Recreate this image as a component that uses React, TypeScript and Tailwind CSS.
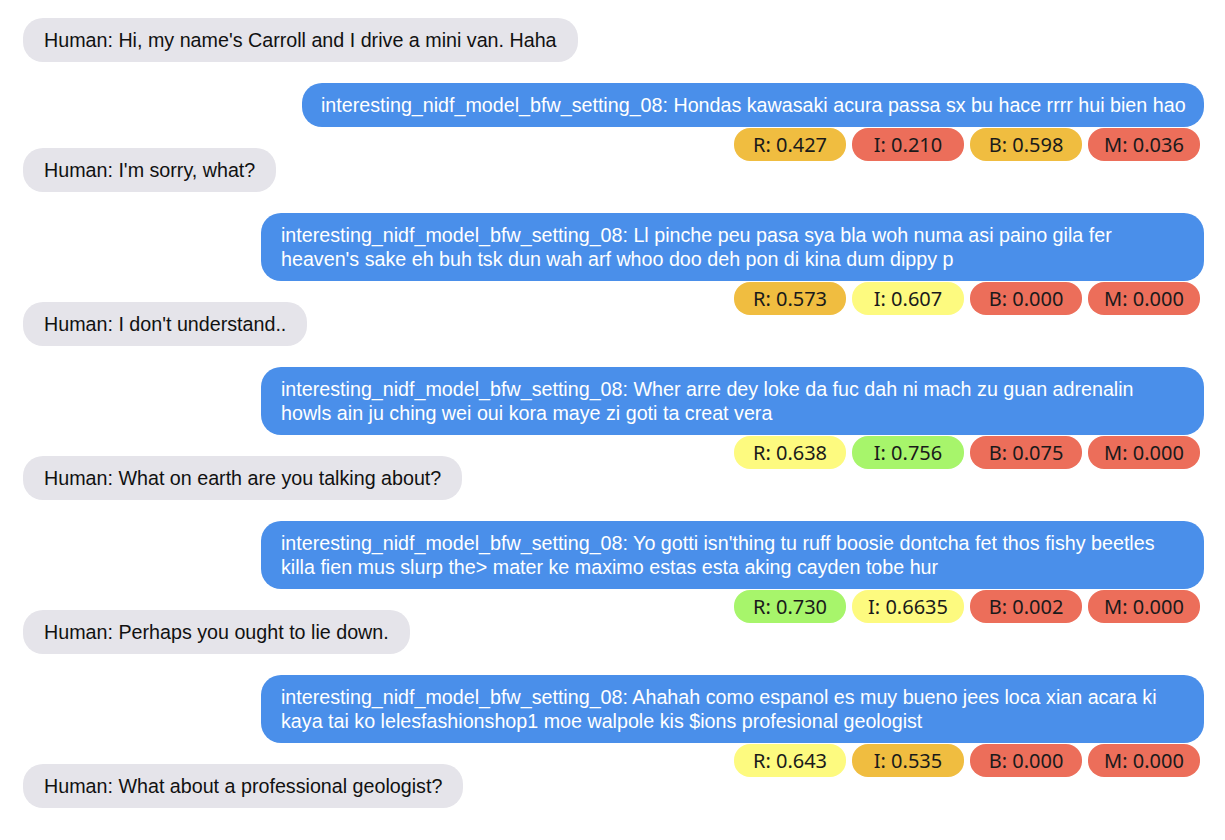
import React from "react";

type Badge = { label: string; color: string };
type Msg =
  | { kind: "human"; text: string }
  | { kind: "bot"; lines: string[]; badges: Badge[]; wide: boolean };

const Y = "bg-[#f0bd40]"; // orange-yellow
const R = "bg-[#ec6e5a]"; // red
const L = "bg-[#fdfa7f]"; // light yellow
const G = "bg-[#a7f56b]"; // green

const P = "interesting_nidf_model_bfw_setting_08: ";

const msgs: Msg[] = [
  { kind: "human", text: "Human: Hi, my name's Carroll and I drive a mini van. Haha" },
  {
    kind: "bot",
    wide: false,
    lines: [P + "Hondas kawasaki acura passa sx bu hace rrrr hui bien hao"],
    badges: [
      { label: "R: 0.427", color: Y },
      { label: "I: 0.210", color: R },
      { label: "B: 0.598", color: Y },
      { label: "M: 0.036", color: R },
    ],
  },
  { kind: "human", text: "Human: I'm sorry, what?" },
  {
    kind: "bot",
    wide: true,
    lines: [
      P + "Ll pinche peu pasa sya bla woh numa asi paino gila fer",
      "heaven's sake eh buh tsk dun wah arf whoo doo deh pon di kina dum dippy p",
    ],
    badges: [
      { label: "R: 0.573", color: Y },
      { label: "I: 0.607", color: L },
      { label: "B: 0.000", color: R },
      { label: "M: 0.000", color: R },
    ],
  },
  { kind: "human", text: "Human: I don't understand.." },
  {
    kind: "bot",
    wide: true,
    lines: [
      P + "Wher arre dey loke da fuc dah ni mach zu guan adrenalin",
      "howls ain ju ching wei oui kora maye zi goti ta creat vera",
    ],
    badges: [
      { label: "R: 0.638", color: L },
      { label: "I: 0.756", color: G },
      { label: "B: 0.075", color: R },
      { label: "M: 0.000", color: R },
    ],
  },
  { kind: "human", text: "Human: What on earth are you talking about?" },
  {
    kind: "bot",
    wide: true,
    lines: [
      P + "Yo gotti isn'thing tu ruff boosie dontcha fet thos fishy beetles",
      "killa fien mus slurp the> mater ke maximo estas esta aking cayden tobe hur",
    ],
    badges: [
      { label: "R: 0.730", color: G },
      { label: "I: 0.6635", color: L },
      { label: "B: 0.002", color: R },
      { label: "M: 0.000", color: R },
    ],
  },
  { kind: "human", text: "Human: Perhaps you ought to lie down." },
  {
    kind: "bot",
    wide: true,
    lines: [
      P + "Ahahah como espanol es muy bueno jees loca xian acara ki",
      "kaya tai ko lelesfashionshop1 moe walpole kis $ions profesional geologist",
    ],
    badges: [
      { label: "R: 0.643", color: L },
      { label: "I: 0.535", color: Y },
      { label: "B: 0.000", color: R },
      { label: "M: 0.000", color: R },
    ],
  },
  { kind: "human", text: "Human: What about a professional geologist?" },
];

export default function App() {
  return (
    <div
      className="min-h-screen bg-white pt-[18px] pl-[23px] pr-[21px] flex flex-col gap-[21px]"
      style={{ fontFamily: '"Liberation Sans", Arial, sans-serif' }}
    >
      {msgs.map((m, i) =>
        m.kind === "human" ? (
          <div
            key={i}
            className="self-start rounded-[20px] bg-[#e5e4ea] px-[21px] py-[10px] text-[19.7px] leading-6 text-[#111] whitespace-nowrap"
          >
            {m.text}
          </div>
        ) : (
          <div key={i} className="relative self-end">
            <div
              className={
                m.wide
                  ? "w-[943px] rounded-[20px] bg-[#4a8fea] pl-[20px] pr-[20px] py-[10px] text-[19.7px] leading-6 text-white whitespace-nowrap"
                  : "w-[902px] rounded-[20px] bg-[#4a8fea] pl-[19px] pr-[10px] py-[10px] text-[19.7px] leading-6 text-white whitespace-nowrap"
              }
            >
              {m.lines.map((l, j) => (
                <div key={j}>{l}</div>
              ))}
            </div>
            <div className="absolute top-full right-[4px] mt-[1px] flex gap-[6px]">
              {m.badges.map((b, j) => (
                <div
                  key={j}
                  className={`${b.color} w-[112px] h-[33px] rounded-[16px] flex items-center justify-center text-[20px] text-[#1a1a1a]`}
                  style={{ fontFamily: '"Noto Sans", "Open Sans", sans-serif' }}
                >
                  {b.label}
                </div>
              ))}
            </div>
          </div>
        )
      )}
    </div>
  );
}
